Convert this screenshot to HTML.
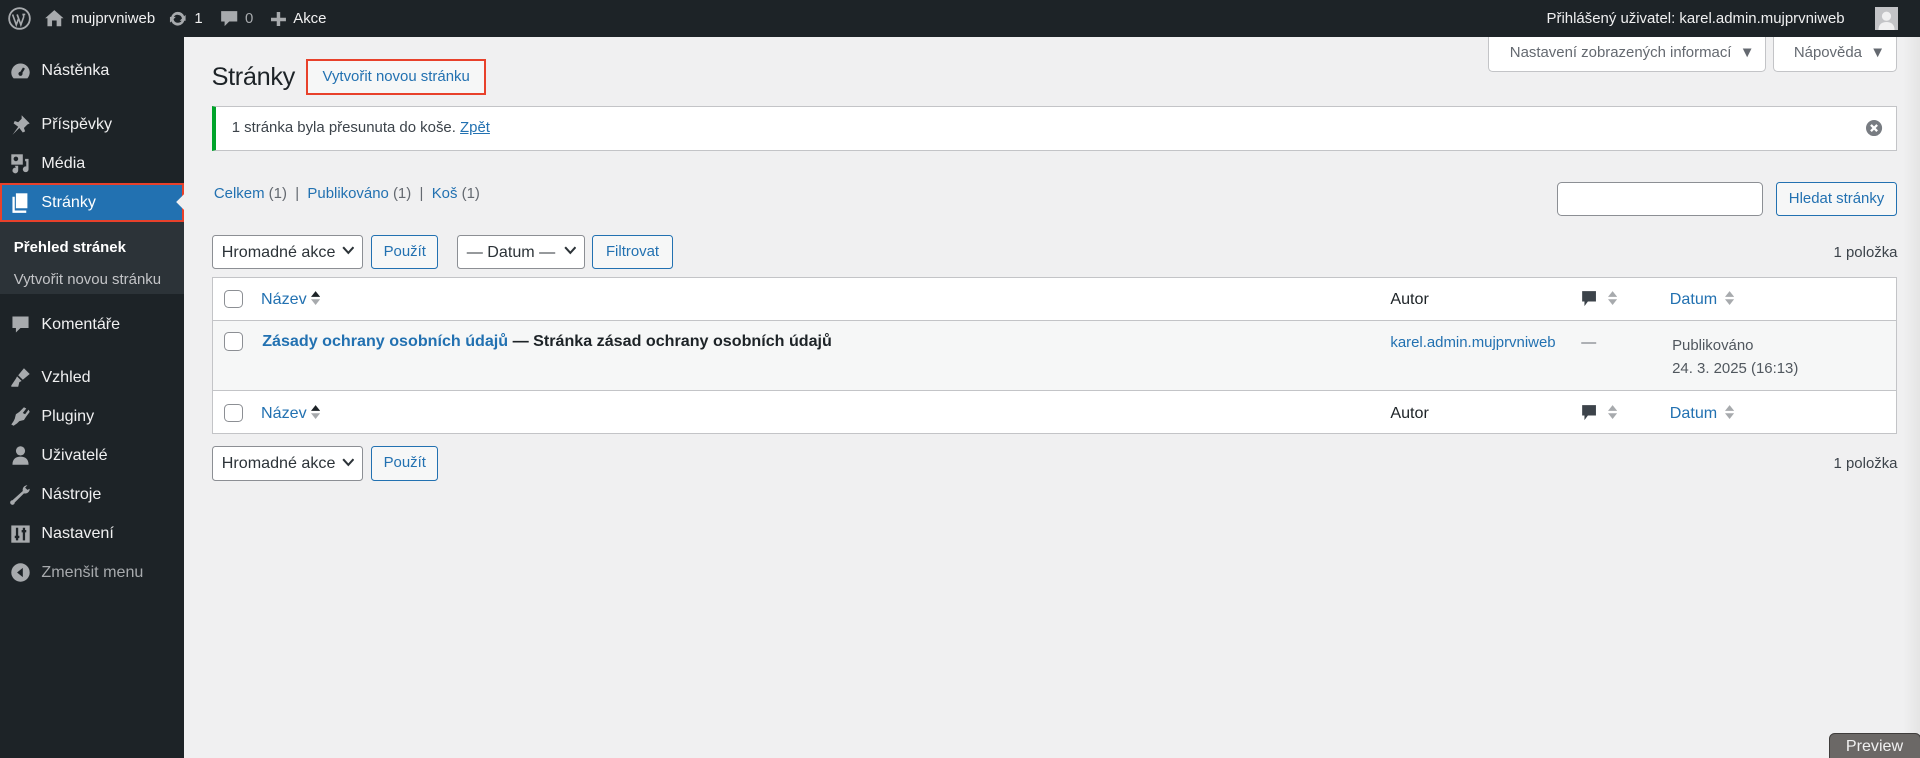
<!DOCTYPE html>
<html><head><meta charset="utf-8"><style>
html,body{margin:0;padding:0;width:1920px;height:758px;overflow:hidden;background:#f0f0f1}
#z{zoom:1.15;width:1670px;height:660px;position:relative;font-family:"Liberation Sans",sans-serif;font-size:13px;color:#3c434a}
.a{position:absolute}
#bar{left:0;top:0;width:1670px;height:32px;background:#1d2327;color:#f0f0f1;font-size:13px}
#bar span{position:absolute;top:9px;white-space:nowrap}
#side{left:0;top:32px;width:160px;height:628px;background:#1d2327}
.mi{position:absolute;left:36px;color:#f0f0f1;font-size:14px;white-space:nowrap}
.ic{position:absolute;left:8px;width:20px;height:20px}
a{color:#2271b1;text-decoration:none}
.btn{position:absolute;height:28px;box-sizing:border-box;border:1px solid #2271b1;border-radius:3px;background:#f6f7f7;color:#2271b1;font-size:13px;line-height:26px;text-align:center}
.sel{position:absolute;height:30px;box-sizing:border-box;border:1px solid #8c8f94;border-radius:3px;background:#fff;color:#2c3338;font-size:14px;line-height:28px;padding-left:8px}
.sel svg{position:absolute;right:7px;top:9px}
.cb{position:absolute;width:16px;height:16px;border:1px solid #8c8f94;border-radius:4px;background:#fff;box-sizing:border-box}
.sort{position:absolute;width:8px;height:14px}
</style></head><body><div id="z">

<div id="bar" class="a">
 <svg class="a" style="left:7px;top:6px" width="20" height="20" viewBox="0 0 20 20"><circle cx="10" cy="10" r="9" fill="none" stroke="#a7aaad" stroke-width="1.6"/><path d="M4 6.5l3.2 9 2-5.5-1.3-3.5M8 6.5l3.2 9 2.3-6.5c.5-1.5-.2-2.5-1-2.5M12.5 6.5h2.5" fill="none" stroke="#a7aaad" stroke-width="1.4"/></svg>
 <svg class="a" style="left:38px;top:8px" width="18" height="16" viewBox="0 0 18 16"><path d="M9 1L1 8h2v7h4v-5h4v5h4V8h2z" fill="#a7aaad"/></svg>
 <span style="left:62px">mujprvniweb</span>
 <svg class="a" style="left:146px;top:8px" width="17" height="17" viewBox="0 0 20 20"><path d="M10 3a7 7 0 0 1 6.5 4.4L18 6v6h-6l2.3-2.3A4.5 4.5 0 0 0 5.6 9H3.1A7 7 0 0 1 10 3zM2 14v-6h6l-2.3 2.3a4.5 4.5 0 0 0 8.7.7h2.5A7 7 0 0 1 3.5 12.6z" fill="#a7aaad"/></svg>
 <span style="left:169px">1</span>
 <svg class="a" style="left:191px;top:9px" width="16" height="16" viewBox="0 0 16 16"><path d="M1 1h14v9H8l-4 4v-4H1z" fill="#a7aaad"/></svg>
 <span style="left:213px;color:#a7aaad">0</span>
 <svg class="a" style="left:236px;top:10px" width="13" height="13" viewBox="0 0 13 13"><path d="M5 0h3v5h5v3H8v5H5V8H0V5h5z" fill="#a7aaad"/></svg>
 <span style="left:255px">Akce</span>
 <span style="right:66px">Přihlášený uživatel: karel.admin.mujprvniweb</span>
 <div class="a" style="left:1630px;top:6px;width:20px;height:20px;background:#c3c4c7"><svg width="20" height="20" viewBox="0 0 20 20"><circle cx="10" cy="8" r="4" fill="#f0f0f1"/><path d="M3 20c0-5 3-7 7-7s7 2 7 7z" fill="#f0f0f1"/></svg></div>
</div>

<div id="side" class="a">
 <svg class="ic" style="top:20px" viewBox="0 0 20 20"><path d="M10 3a8 8 0 0 0-8 8c0 2 .7 3.7 2 5h12a8 8 0 0 0 2-5 8 8 0 0 0-8-8z" fill="#a7aaad"/><path d="M10 12l3-5" stroke="#1d2327" stroke-width="2"/><circle cx="10" cy="12" r="1.8" fill="#1d2327"/></svg>
 <div class="mi" style="top:21px">Nástěnka</div>
 <svg class="ic" style="top:66px" viewBox="0 0 20 20"><path d="M11 2l7 7-2 1-3 3 1 3-2 1-3-4-6 6 5-7-4-3 1-2 3 1 3-3z" fill="#a7aaad"/></svg>
 <div class="mi" style="top:68px">Příspěvky</div>
 <svg class="ic" style="top:100px" viewBox="0 0 20 20"><rect x="2" y="2" width="10" height="9" fill="#a7aaad"/><circle cx="6" cy="6" r="2" fill="#1d2327"/><path d="M14 6h3v9a2.5 2.5 0 1 1-2-2.4V8h-1zM5 12h3v4a2.5 2.5 0 1 1-2-2.4z" fill="#a7aaad"/></svg>
 <div class="mi" style="top:102px">Média</div>
 <div class="a" style="left:0;top:127px;width:160px;height:34px;background:#2271b1;box-sizing:border-box;border:2px solid #e8412b"></div>
 <svg class="a" style="left:152px;top:137px" width="8" height="14" viewBox="0 0 8 14"><path d="M8 0v14L1 7z" fill="#f0f0f1"/></svg>
 <svg class="ic" style="top:134px" viewBox="0 0 20 20"><path d="M6 2h10v13H6z" fill="#fff"/><path d="M3 5h2v12h10v2H3z" fill="#fff"/></svg>
 <div class="mi" style="top:136px;color:#fff">Stránky</div>
 <div class="a" style="left:0;top:161px;width:160px;height:63px;background:#2c3338"></div>
 <div class="mi" style="left:12px;top:176px;font-size:13px;font-weight:bold;color:#fff">Přehled stránek</div>
 <div class="mi" style="left:12px;top:204px;font-size:13px;color:#c3c4c7">Vytvořit novou stránku</div>
 <svg class="ic" style="top:240px" viewBox="0 0 20 20"><path d="M3 3h14v10h-7l-4 4v-4H3z" fill="#a7aaad"/></svg>
 <div class="mi" style="top:242px">Komentáře</div>
 <svg class="ic" style="top:286px" viewBox="0 0 20 20"><path d="M13 2l5 5-6 5-4-4zM7 9l4 4-2 1-1 4-6 0 0-1 4-6z" fill="#a7aaad"/></svg>
 <div class="mi" style="top:288px">Vzhled</div>
 <svg class="ic" style="top:320px" viewBox="0 0 20 20"><path d="M13 2l2 1-3 4 2 1 3-4 1 2-3 4-2 3-4 1-2 2-3 2-2-1 2-3 1-2 1-4 3-2z" fill="#a7aaad"/></svg>
 <div class="mi" style="top:322px">Pluginy</div>
 <svg class="ic" style="top:354px" viewBox="0 0 20 20"><circle cx="10" cy="6" r="4" fill="#a7aaad"/><path d="M3 18c0-5 3-7 7-7s7 2 7 7z" fill="#a7aaad"/></svg>
 <div class="mi" style="top:356px">Uživatelé</div>
 <svg class="ic" style="top:388px" viewBox="0 0 20 20"><path d="M16 2a4 4 0 0 0-4 5L3 15a2 2 0 1 0 2 2l8-8a4 4 0 0 0 5-4l-2 1-2-2z" fill="#a7aaad"/></svg>
 <div class="mi" style="top:390px">Nástroje</div>
 <svg class="ic" style="top:422px" viewBox="0 0 20 20"><rect x="2" y="3" width="16" height="15" fill="#a7aaad"/><path d="M7 5v11M13 5v11M5 13h4M11 8h4" stroke="#1d2327" stroke-width="2"/></svg>
 <div class="mi" style="top:424px">Nastavení</div>
 <svg class="ic" style="top:456px" viewBox="0 0 20 20"><circle cx="10" cy="10" r="8" fill="#a7aaad"/><path d="M12 6v8l-5-4z" fill="#1d2327"/></svg>
 <div class="mi" style="top:458px;color:#a7aaad">Zmenšit menu</div>
</div>

<div class="a" style="left:1294px;top:32px;width:242px;height:31px;background:#fff;border:1px solid #c3c4c7;border-top:none;border-radius:0 0 4px 4px;box-sizing:border-box;color:#646970;line-height:28px;padding-left:18px">Nastavení zobrazených informací &nbsp;▼</div>
<div class="a" style="left:1542px;top:32px;width:108px;height:31px;background:#fff;border:1px solid #c3c4c7;border-top:none;border-radius:0 0 4px 4px;box-sizing:border-box;color:#646970;line-height:28px;padding-left:17px">Nápověda &nbsp;▼</div>

<div class="a" style="left:184px;top:55px;font-size:22px;color:#1d2327;letter-spacing:-0.3px">Stránky</div>
<div class="a" style="left:266px;top:51px;width:157px;height:32px;box-sizing:border-box;border:2px solid #e8412b;background:#f6f7f7;color:#2271b1;line-height:28px;text-align:center">Vytvořit novou stránku</div>

<div class="a" style="left:184px;top:92px;width:1466px;height:39px;background:#fff;border:1px solid #c3c4c7;border-left:4px solid #00a32a;box-sizing:border-box;line-height:36px;padding-left:14px;color:#3c434a">1 stránka byla přesunuta do koše. <a style="text-decoration:underline">Zpět</a></div>
<svg class="a" style="left:1623px;top:104px" width="14" height="14" viewBox="0 0 14 14"><circle cx="7" cy="7" r="7" fill="#787c82"/><path d="M4.3 4.3l5.4 5.4M9.7 4.3l-5.4 5.4" stroke="#fff" stroke-width="2"/></svg>

<div class="a" style="left:186px;top:161px;color:#646970"><a>Celkem</a> (1) &nbsp;| &nbsp;<a>Publikováno</a> (1) &nbsp;| &nbsp;<a>Koš</a> (1)</div>
<div class="a" style="left:1354px;top:158px;width:179px;height:30px;background:#fff;border:1px solid #8c8f94;border-radius:4px;box-sizing:border-box"></div>
<div class="btn" style="left:1544px;top:158px;width:106px;height:30px;line-height:28px">Hledat stránky</div>

<div class="sel" style="left:184px;top:204px;width:132px">Hromadné akce<svg width="11" height="8" viewBox="0 0 11 8"><path d="M1 1l4.5 5L10 1" fill="none" stroke="#2c3338" stroke-width="1.8"/></svg></div>
<div class="btn" style="left:323px;top:204px;width:58px;height:30px;line-height:28px">Použít</div>
<div class="sel" style="left:397px;top:204px;width:112px">— Datum —<svg width="11" height="8" viewBox="0 0 11 8"><path d="M1 1l4.5 5L10 1" fill="none" stroke="#2c3338" stroke-width="1.8"/></svg></div>
<div class="btn" style="left:515px;top:204px;width:70px;height:30px;line-height:28px">Filtrovat</div>
<div class="a" style="right:20px;top:212px;color:#3c434a">1 položka</div>

<div class="a" style="left:184px;top:241px;width:1466px;height:136px;background:#fff;border:1px solid #c3c4c7;box-sizing:border-box"></div>
<div class="a" style="left:185px;top:278px;width:1464px;height:62px;background:#f6f7f7;border-top:1px solid #c3c4c7;border-bottom:1px solid #c3c4c7;box-sizing:border-box"></div>

<div class="cb" style="left:195px;top:252px"></div>
<a class="a" style="left:227px;top:252px;font-size:14px">Název</a>
<svg class="sort" style="left:270px;top:252px" viewBox="0 0 8 14"><path d="M0 6L4 1l4 5z" fill="#1d2327"/><path d="M0 8l4 5 4-5z" fill="#a7aaad"/></svg>
<div class="a" style="left:1209px;top:252px;font-size:14px;color:#1d2327">Autor</div>
<svg class="a" style="left:1375px;top:252px" width="14" height="16" viewBox="0 0 14 16"><path d="M1 1h12v9H6l-3 4v-4H1z" fill="#3c434a"/></svg>
<svg class="sort" style="left:1398px;top:252px" viewBox="0 0 8 14"><path d="M0 6L4 1l4 5zM0 8l4 5 4-5z" fill="#a7aaad"/></svg>
<a class="a" style="left:1452px;top:252px;font-size:14px">Datum</a>
<svg class="sort" style="left:1500px;top:252px" viewBox="0 0 8 14"><path d="M0 6L4 1l4 5zM0 8l4 5 4-5z" fill="#a7aaad"/></svg>

<div class="cb" style="left:195px;top:289px"></div>
<div class="a" style="left:228px;top:289px;font-size:14px;font-weight:bold;color:#1d2327"><a>Zásady ochrany osobních údajů</a> — Stránka zásad ochrany osobních údajů</div>
<a class="a" style="left:1209px;top:290px">karel.admin.mujprvniweb</a>
<div class="a" style="left:1375px;top:290px;color:#646970">—</div>
<div class="a" style="left:1454px;top:290px;color:#50575e;line-height:20px">Publikováno<br>24. 3. 2025 (16:13)</div>

<div class="cb" style="left:195px;top:351px"></div>
<a class="a" style="left:227px;top:351px;font-size:14px">Název</a>
<svg class="sort" style="left:270px;top:351px" viewBox="0 0 8 14"><path d="M0 6L4 1l4 5z" fill="#1d2327"/><path d="M0 8l4 5 4-5z" fill="#a7aaad"/></svg>
<div class="a" style="left:1209px;top:351px;font-size:14px;color:#1d2327">Autor</div>
<svg class="a" style="left:1375px;top:351px" width="14" height="16" viewBox="0 0 14 16"><path d="M1 1h12v9H6l-3 4v-4H1z" fill="#3c434a"/></svg>
<svg class="sort" style="left:1398px;top:351px" viewBox="0 0 8 14"><path d="M0 6L4 1l4 5zM0 8l4 5 4-5z" fill="#a7aaad"/></svg>
<a class="a" style="left:1452px;top:351px;font-size:14px">Datum</a>
<svg class="sort" style="left:1500px;top:351px" viewBox="0 0 8 14"><path d="M0 6L4 1l4 5zM0 8l4 5 4-5z" fill="#a7aaad"/></svg>

<div class="sel" style="left:184px;top:388px;width:132px">Hromadné akce<svg width="11" height="8" viewBox="0 0 11 8"><path d="M1 1l4.5 5L10 1" fill="none" stroke="#2c3338" stroke-width="1.8"/></svg></div>
<div class="btn" style="left:323px;top:388px;width:58px;height:30px;line-height:28px">Použít</div>
<div class="a" style="right:20px;top:396px;color:#3c434a">1 položka</div>

<div class="a" style="left:1655px;top:32px;width:15px;height:628px;background:linear-gradient(90deg,#f0f0f1,#e4e4e4)"></div>
<div class="a" style="left:1590px;top:637px;width:80px;height:24px;background:#6b6866;border:1px solid #3f3d3c;border-radius:5px 5px 0 0;box-sizing:border-box;color:#f0f0f0;font-size:14px;line-height:22px;text-align:center">Preview</div>
</div></body></html>
